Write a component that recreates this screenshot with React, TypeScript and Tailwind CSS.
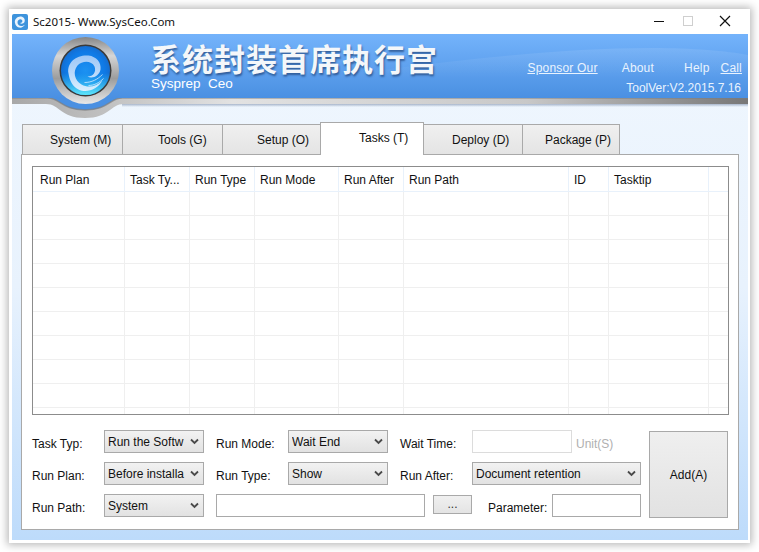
import React from "react";

function Select({ w, text }: { w: string; text: string }) {
  return (
    <div className={`${w} h-[23px] shrink-0 border border-[#a9a9a9] bg-gradient-to-b from-[#f2f2f2] to-[#e2e2e2] flex items-center pl-[3px] pr-[4px] text-[12px] text-[#111] overflow-hidden`}>
      <span className="flex-1 min-w-0 overflow-hidden whitespace-nowrap">{text}</span>
      <svg width="9" height="7" viewBox="0 0 9 7" className="shrink-0 ml-[2px]">
        <path d="M1 1.5 L4.5 5 L8 1.5" fill="none" stroke="#4a4a4a" strokeWidth="1.8" />
      </svg>
    </div>
  );
}

function Label({ w, text }: { w: string; text: string }) {
  return <div className={`${w} shrink-0 text-[12px] text-[#111] whitespace-nowrap pt-[5px]`}>{text}</div>;
}

const tabs = [
  { t: "System (M)", w: "w-[101px]", pl: "pl-[27px]" },
  { t: "Tools (G)", w: "w-[101px]", pl: "pl-[35px]" },
  { t: "Setup (O)", w: "w-[99px]", pl: "pl-[34px]" },
];
const tabs2 = [
  { t: "Deploy (D)", w: "w-[100px]", pl: "pl-[28px]" },
  { t: "Package (P)", w: "w-[98px]", pl: "pl-[22px]" },
];

function Tab({ t, w, pl }: { t: string; w: string; pl: string }) {
  return (
    <div className={`${w} ${pl} h-[31px] shrink-0 -mr-px border border-[#a9a9a9] bg-gradient-to-b from-[#f0f0f0] to-[#e4e4e4] text-[12px] text-[#111] pt-[6px] whitespace-nowrap`}>
      {t}
    </div>
  );
}

const cols = [
  ["Run Plan", "w-[92px]"],
  ["Task Ty...", "w-[65px]"],
  ["Run Type", "w-[65px]"],
  ["Run Mode", "w-[84px]"],
  ["Run After", "w-[65px]"],
  ["Run Path", "w-[165px]"],
  ["ID", "w-[40px]"],
  ["Tasktip", "w-[100px]"],
  ["", "flex-1"],
];

function Logo() {
  return (
    <svg width="120" height="96" viewBox="0 0 120 96" className="absolute left-0 top-0">
      <defs>
        <linearGradient id="ring" x1="0" y1="0" x2="0" y2="1">
          <stop offset="0" stopColor="#858585" />
          <stop offset="0.28" stopColor="#d6d6d6" />
          <stop offset="0.62" stopColor="#9c9c9c" />
          <stop offset="1" stopColor="#e8e8e8" />
        </linearGradient>
        <radialGradient id="ball" cx="0.5" cy="0.5" r="0.55">
          <stop offset="0" stopColor="#1c92f2" />
          <stop offset="0.7" stopColor="#0f7ae6" />
          <stop offset="1" stopColor="#1668c8" />
        </radialGradient>
        <linearGradient id="glow" x1="0" y1="0" x2="0" y2="1">
          <stop offset="0.55" stopColor="#38d0f8" stopOpacity="0" />
          <stop offset="1" stopColor="#5fe8fb" />
        </linearGradient>
        <linearGradient id="swirl" x1="0" y1="0" x2="0" y2="1">
          <stop offset="0" stopColor="#a9cdf8" />
          <stop offset="1" stopColor="#e6f3ff" />
        </linearGradient>
      </defs>
      <g transform="translate(-11.5 -9.5)">
        <circle cx="85" cy="46" r="33.5" fill="url(#ring)" />
        <circle cx="85" cy="46" r="26" fill="#3a3a3a" />
        <circle cx="85" cy="46" r="24.5" fill="url(#ball)" />
        <circle cx="85" cy="46" r="24.5" fill="url(#glow)" />
        <g transform="translate(0 3)">
          <path
            d="M68 46 C66 34 77 27 88 28 C96 29 101 35 100 42 C99 48 92 52 87 49 C93 49 96 44 94 39 C91 33 82 33 77 38 C72 44 74 53 81 57 C88 61 96 59 102 53 C97 62 86 66 78 62 C72 59 69 53 68 46 Z"
            fill="url(#swirl)"
            opacity="0.92"
          />
          <path d="M84 55 C91 55 97 52 102 47 M88 58 C94 58 99 55 103 51" fill="none" stroke="#dcedff" strokeWidth="1" opacity="0.75" />
        </g>
      </g>
    </svg>
  );
}

export default function App() {
  return (
    <div className="w-[759px] h-[552px] bg-white pl-[9px] pt-[9px] overflow-hidden" style={{ fontFamily: '"Liberation Sans", Arial, sans-serif' }}>
      <div className="w-[741px] h-[534px] bg-white shadow-[0_0_8px_2px_rgba(0,0,0,0.28)] flex flex-col pl-[3px] pr-[2px] pb-[3px]">
        {/* Title bar */}
        <div className="h-[25px] shrink-0 flex items-center">
          <svg width="16" height="16" viewBox="0 0 16 16" className="shrink-0">
            <rect width="16" height="16" rx="2" fill="#3d93dc" />
            <path d="M3 9 C2 5 6 2 9 2.5 C12 3 13.5 5.5 12.5 8 C11.5 10 9 10 8 9 C10 9 11 7.5 10 6 C8.5 4.5 6 5.5 5.5 8 C5.3 11 8 12.5 10 12 C11.5 11.7 12.5 11 13 10.5 C12 13 9 14 7 13.5 C5 13 3.5 11.5 3 9 Z" fill="#eaf4fd" />
          </svg>
          <span className="ml-[5px] text-[11.5px] text-[#111] whitespace-nowrap" style={{ fontFamily: '"Noto Sans", sans-serif' }}>Sc2015- Www.SysCeo.Com</span>
          <div className="ml-auto flex items-center mt-[-1px]">
            <svg width="12" height="12" viewBox="0 0 12 12" className="mr-[17px]"><path d="M1 6.5 H11" stroke="#111" strokeWidth="1" /></svg>
            <svg width="12" height="12" viewBox="0 0 12 12" className="mr-[24px]"><rect x="1.5" y="1.5" width="9" height="9" fill="none" stroke="#cfcfcf" /></svg>
            <svg width="14" height="14" viewBox="0 0 14 14" className="mr-[16px]"><path d="M2 2 L12 12 M12 2 L2 12" stroke="#111" strokeWidth="1.2" /></svg>
          </div>
        </div>

        {/* Client */}
        <div className="flex-1 flex flex-col bg-gradient-to-b from-[#f0f7fe] via-[#e8f2fd] to-[#bddbfb]">
          {/* Banner */}
          <div className="relative h-[64px] shrink-0 bg-gradient-to-b from-[#74b3fb] to-[#4a90e2]">
            <svg width="736" height="64" viewBox="0 0 736 64" className="absolute left-0 top-0">
              <defs>
                <linearGradient id="arc" x1="0" y1="0" x2="0" y2="1">
                  <stop offset="0" stopColor="#ffffff" stopOpacity="0.1" />
                  <stop offset="0.6" stopColor="#ffffff" stopOpacity="0" />
                </linearGradient>
              </defs>
              <path d="M120 64 C300 50 480 14 640 14 C680 14 715 17 736 21 V64 Z" fill="url(#arc)" />
            </svg>
            <div className="absolute left-[138px] top-[8px] text-[31px] leading-[32px] font-bold text-[#f4f7fa] tracking-[1px] whitespace-nowrap [text-shadow:1px_2px_2px_rgba(20,50,100,0.6)]" style={{ fontFamily: '"Noto Sans CJK SC", sans-serif' }}>
              系统封装首席执行宫
            </div>
            <div className="absolute left-[139px] top-[42px] text-[13.5px] leading-[16px] text-white whitespace-pre">Sysprep  Ceo</div>
            <div className="absolute right-[6px] top-[26px] flex text-[12px] leading-[16px] text-[#e9f3fe] tracking-[0.2px]">
              <span className="underline mr-[24px]">Sponsor Our</span>
              <span className="mr-[30px]">About</span>
              <span className="mr-[11px]">Help</span>
              <span className="underline">Call</span>
            </div>
            <div className="absolute right-[7px] top-[46px] text-[12px] leading-[16px] text-[#e9f3fe]">ToolVer:V2.2015.7.16</div>
          </div>
          {/* Silver bar with logo notch */}
          <div className="relative h-[20px] shrink-0">
            <svg width="736" height="24" viewBox="0 0 736 24" className="absolute left-0 top-0">
              <defs>
                <linearGradient id="sb" x1="0" y1="0" x2="1" y2="0">
                  <stop offset="0" stopColor="#a8a8a8" />
                  <stop offset="0.3" stopColor="#e2e2e2" />
                  <stop offset="0.7" stopColor="#c8c8c8" />
                  <stop offset="1" stopColor="#777" />
                </linearGradient>
                <linearGradient id="sd" x1="0" y1="0" x2="0" y2="1">
                  <stop offset="0" stopColor="#8a9ab5" stopOpacity="0.7" />
                  <stop offset="1" stopColor="#8a9ab5" stopOpacity="0" />
                </linearGradient>
              </defs>
              <rect x="110" y="6" width="626" height="3" fill="url(#sd)" />
              <path d="M0 0 H736 V6 H112 C98 6 98 20 73 20 C48 20 48 6 34 6 H0 Z" fill="url(#sb)" />
              <path d="M36 0 H110 C98 0 96 12 73 12 C50 12 48 0 36 0 Z" fill="#4a90e2" />
              <path d="M36 0 C48 0 50 12 73 12 C96 12 98 0 110 0" fill="none" stroke="#7d7d7d" strokeWidth="1.5" opacity="0.7" />
              <path d="M0 0.5 H36 M110 0.5 H736" stroke="#7d7d7d" strokeWidth="1" opacity="0.45" />
            </svg>
            <div className="absolute left-0 top-[-64px]"><Logo /></div>
          </div>

          {/* Tabs + panel */}
          <div className="flex flex-col pl-[9px] pt-[4px]">
            <div className="flex items-end pl-px h-[33px] relative z-10 -mb-px">
              {tabs.map((t) => <Tab key={t.t} {...t} />)}
              <div className="w-[104px] h-[33px] shrink-0 -mr-px border border-b-0 border-[#a9a9a9] bg-white text-[12px] text-[#111] pl-[38px] pt-[6px] whitespace-nowrap">Tasks (T)</div>
              {tabs2.map((t) => <Tab key={t.t} {...t} />)}
            </div>
            <div className="w-[718px] h-[376px] border border-[#a9a9a9] bg-white pl-[10px] pr-[9px] pt-[11px]">
              {/* Table */}
              <div className="h-[249px] border border-[#8c8c8c] flex flex-col overflow-hidden">
                <div className="h-[25px] shrink-0 flex border-b border-[#e8f1fb]">
                  {cols.map(([t, w], i) => (
                    <div key={i} className={`${w} shrink-0 border-r border-[#e8f1fb] text-[12px] text-[#111] ${i === 0 ? "pl-[7px]" : "pl-[5px]"} pt-[4px] whitespace-nowrap last:border-r-0`}>{t}</div>
                  ))}
                </div>
                {Array.from({ length: 10 }).map((_, r) => (
                  <div key={r} className="h-[24px] shrink-0 flex border-b border-[#efefef]">
                    {cols.map(([, w], i) => (
                      <div key={i} className={`${w} shrink-0 border-r border-[#efefef] last:border-r-0`} />
                    ))}
                  </div>
                ))}
              </div>

              {/* Form */}
              <div className="flex mt-[15px]">
                <div className="w-[617px] shrink-0 flex flex-col gap-[9px]">
                  <div className="flex h-[23px]">
                    <Label w="w-[72px]" text="Task Typ:" />
                    <Select w="w-[100px]" text="Run the Softw" />
                    <div className="w-[12px] shrink-0" />
                    <Label w="w-[72px]" text="Run Mode:" />
                    <Select w="w-[100px]" text="Wait End" />
                    <div className="w-[12px] shrink-0" />
                    <Label w="w-[72px]" text="Wait Time:" />
                    <div className="w-[100px] h-[23px] shrink-0 border border-[#dcdcdc] bg-white" />
                    <div className="ml-[4px] text-[12px] text-[#b0b0b0] pt-[5px]">Unit(S)</div>
                  </div>
                  <div className="flex h-[23px]">
                    <Label w="w-[72px]" text="Run Plan:" />
                    <Select w="w-[100px]" text="Before installa" />
                    <div className="w-[12px] shrink-0" />
                    <Label w="w-[72px]" text="Run Type:" />
                    <Select w="w-[100px]" text="Show" />
                    <div className="w-[12px] shrink-0" />
                    <Label w="w-[72px]" text="Run After:" />
                    <Select w="w-[169px]" text="Document retention" />
                  </div>
                  <div className="flex h-[23px]">
                    <Label w="w-[72px]" text="Run Path:" />
                    <Select w="w-[100px]" text="System" />
                    <div className="w-[12px] shrink-0" />
                    <div className="w-[209px] h-[23px] shrink-0 border border-[#a9a9a9] bg-white" />
                    <div className="ml-[8px] w-[39px] h-[19px] mt-[1px] shrink-0 border border-[#a9a9a9] bg-gradient-to-b from-[#f0f0f0] to-[#e4e4e4] text-[12px] leading-[17px] text-center text-[#333]">...</div>
                    <div className="ml-[16px] w-[64px] shrink-0 text-[12px] text-[#111] pt-[5px] whitespace-nowrap">Parameter:</div>
                    <div className="w-[89px] h-[23px] shrink-0 border border-[#a9a9a9] bg-white" />
                  </div>
                </div>
                <div className="w-[79px] h-[87px] mt-px shrink-0 border border-[#a9a9a9] bg-gradient-to-b from-[#efefef] to-[#e2e2e2] flex items-center justify-center text-[12px] text-[#111]">Add(A)</div>
              </div>
            </div>
          </div>
        </div>
      </div>
    </div>
  );
}
